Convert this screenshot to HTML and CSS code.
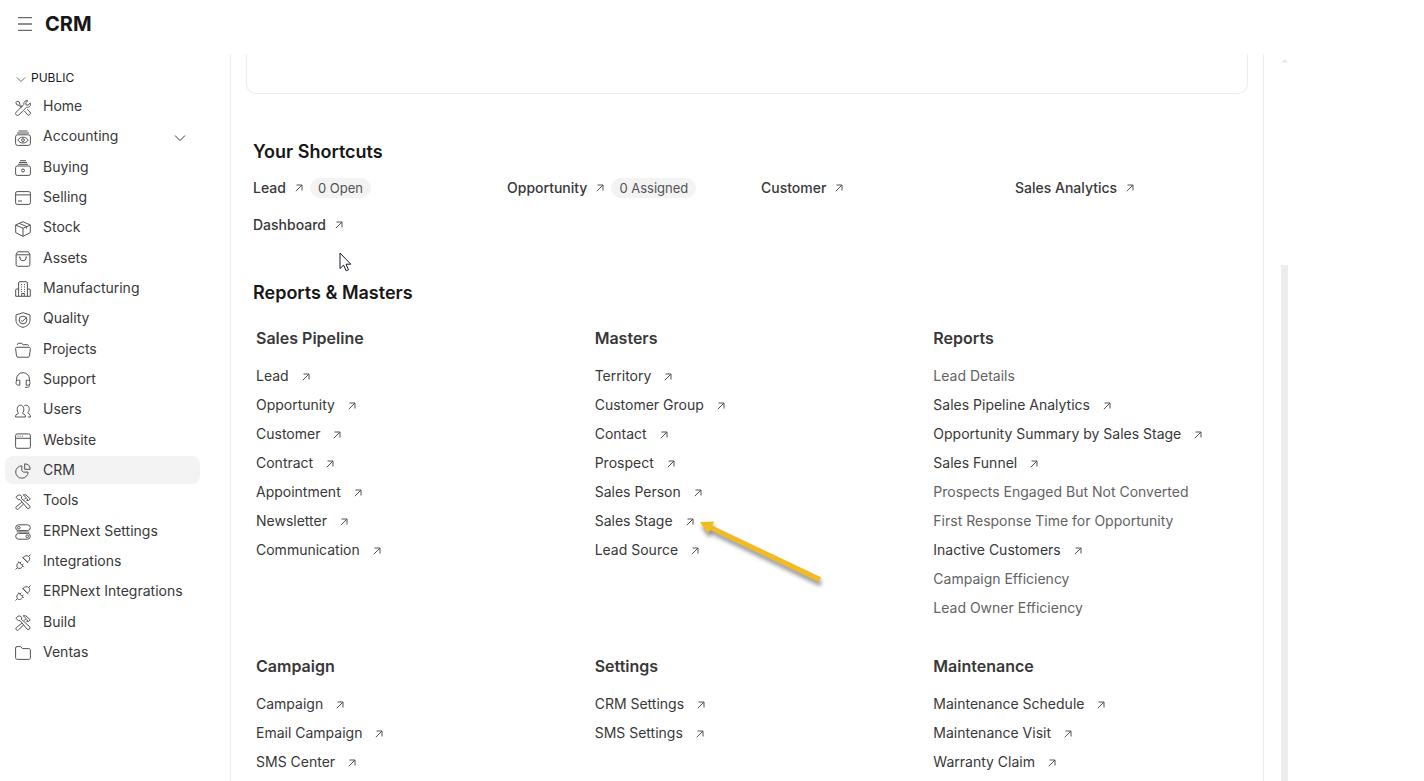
FILE: index.html
```
<!DOCTYPE html>
<html lang="en">
<head>
<meta charset="utf-8">
<meta name="viewport" content="width=device-width, initial-scale=1">
<title>CRM</title>
<link rel="stylesheet" href="styles.css">
</head>
<body>
<svg class="sprite" aria-hidden="true">
  <symbol id="i-out" viewBox="0 0 8 8"><path d="M1.5 1h5.5v5.5M7 1 .8 7.2"/></symbol>
  <symbol id="i-down" viewBox="0 0 12 8"><path d="M1 1.5 6 6.5 11 1.5"/></symbol>
  <symbol id="i-home" viewBox="0 0 16 16"><path d="M2 1.2 4.4 2l.5 2.3L7.4 7M2 1.2.9 2.5l.8 2.2 2.3.6 2.6 2.5M15.2 3.1 13 5.2l-1.9-.4-.4-1.9L12.9.8c-2.2-.7-4.6.9-4.1 3.7L1.2 12.2a1.9 1.9 0 0 0 2.7 2.7l7.6-7.6c2.8.6 4.6-1.9 3.7-4.2zM9.5 11l2.8 3.5a1.8 1.8 0 0 0 2.6-2.6L12 9.3"/></symbol>
  <symbol id="i-accounting" viewBox="0 0 16 16"><path d="M3.500 1h9M2 3h12"/><rect x=".6" y="4.800" width="14.800" height="10.600" rx="2"/><path d="M2.800 10.100c1.300-2 3-2.900 5.200-2.900s3.900.9 5.200 2.900C11.900 12.100 10.200 13 8 13s-3.900-.9-5.200-2.900z"/><circle cx="8" cy="10.100" r="1.400"/></symbol>
  <symbol id="i-buying" viewBox="0 0 16 16"><path d="M5 .7h6M4 2.500h8M3 4.300h10"/><rect x=".6" y="6" width="14.800" height="9.400" rx="1.600"/><circle cx="8" cy="10.500" r="1.500"/></symbol>
  <symbol id="i-selling" viewBox="0 0 16 16"><rect x=".6" y="1.600" width="14.800" height="12.800" rx="1.600"/><path d="M.6 4.900h14.800M3 11h4"/></symbol>
  <symbol id="i-stock" viewBox="0 0 16 16"><path d="M8 .7 15.300 4v7.600L8 15.400.7 11.600V4zM.7 4 8 7.300 15.300 4M8 7.300v8M4.300 2.400l7.300 3.200v1.900"/></symbol>
  <symbol id="i-assets" viewBox="0 0 16 16"><path d="M2.700.8h10.600l1.600 2.500v10.300a1.700 1.700 0 0 1-1.700 1.700H2.800a1.700 1.700 0 0 1-1.700-1.700V3.300zM1.100 3.800h13.800M4.800 6v.6a3.200 3.200 0 0 0 6.400 0V6M4.100 6h1.400M10.500 6h1.400"/></symbol>
  <symbol id="i-manufacturing" viewBox="0 0 16 16"><path d="M3.600 15.300V2a1.300 1.300 0 0 1 1.300-1.300h6.200A1.300 1.300 0 0 1 12.400 2v13.300M3.600 8H1.700a1 1 0 0 0-1 1v6.300h14.600V9a1 1 0 0 0-1-1h-1.900M6.700 15v-2.500h2.600V15"/><path d="M6 3.600h1M9 3.600h1M6 6h1M9 6h1M6 8.400h1M9 8.400h1M6 10.600h1M9 10.600h1"/></symbol>
  <symbol id="i-quality" viewBox="0 0 16 16"><path d="M8 .7 15 2.900v5.300c0 3.800-3.200 6.300-7 7.200-3.800-.9-7-3.400-7-7.200V2.900z"/><circle cx="8" cy="8" r="3.900"/><path d="M5.800 8.200 7.300 9.500 11.500 5.500"/></symbol>
  <symbol id="i-projects" viewBox="0 0 16 16"><path d="M2.500 3V2.300c0-.6.400-1 1-1h3.200l1.500 1.400h4.300c.6 0 1 .4 1 1v.4M1.700 5.300h12.600c.7 0 1.200.5 1.100 1.200l-.9 7.400c-.1.700-.7 1.300-1.500 1.300H3c-.8 0-1.400-.6-1.500-1.300L.6 6.500c-.1-.7.4-1.200 1.100-1.200z"/></symbol>
  <symbol id="i-support" viewBox="0 0 16 16"><path d="M1.500 9V7.200a6.500 6.500 0 0 1 13 0V9M14.500 12v1.500c0 1-.8 1.800-1.800 1.800H10"/><path d="M4.800 8.200v5H3.300C1.800 13.200 1 12 1 10.700s.8-2.500 2.300-2.500zM11.200 8.200v5h1.500c1.500 0 2.300-1.200 2.300-2.500s-.8-2.500-2.300-2.500z"/></symbol>
  <symbol id="i-users" viewBox="0 0 16 16"><path d="M.6 14v-1.200c0-1.700 3-1.700 3-2.800C2.300 9 2 7.300 2.300 5.500 2.500 3.500 3.700 2.200 5.500 2.200s3 1.300 3.200 3.300C9 7.300 8.700 9 7.400 10c0 1.100 3 1.100 3 2.800V14zM9.300 2.700c2.700-1.300 4.700.2 4.900 2.700.1 1.900-.3 3.200-1.400 4.200 0 1.100 2.600 1.500 2.600 3.200V14h-2.600"/></symbol>
  <symbol id="i-website" viewBox="0 0 16 16"><rect x=".6" y=".9" width="14.800" height="14.400" rx="1.600"/><path d="M.6 5.300h14.800M2.500 3.200h1M4.700 3.200h1M6.900 3.200h1"/></symbol>
  <symbol id="i-crm" viewBox="0 0 16 16"><path d="M6.800 2.800a6.200 6.200 0 1 0 6.300 6.300H8.300L6.800 7.600z"/><path d="M9.700.8v5.500h5.500C15.200 3 13 .8 9.700.8z"/></symbol>
  <symbol id="i-tools" viewBox="0 0 16 16"><path d="M3.200 1 1 3.200l2.300 2.500L5 5.500 12 14a1.700 1.700 0 0 0 2.600-2.300L6.300 4.200l.5-1.700L5.300 1zM8.200.8 12.500 5l-.4 1.500M8.200.8h2.600l4.500 4-1.800 1.800-2-.2M10.700 4 9 5.700M6.800 8.200l-5.500 4.500a1.500 1.500 0 0 0 2.200 2.100L8.600 10"/></symbol>
  <symbol id="i-settings" viewBox="0 0 16 16"><rect x=".7" y=".8" width="14.600" height="5.800" rx="2.900"/><rect x=".7" y="9.400" width="14.600" height="5.800" rx="2.900"/><circle cx="3.800" cy="3.700" r="1.300"/><circle cx="12.200" cy="12.300" r="1.300"/><path d="M2.500 6.600C1.500 7.500 2.200 8 3.500 8h9c1.300 0 2 .5 1 1.400"/></symbol>
  <symbol id="i-integrations" viewBox="0 0 16 16"><path d="M15.600.6 13.800 2.300M8 3.700c1.500-2 4-2.700 5.700-1.200s1 4-1.200 5.700zM7.300 3.200l5.800 5.700M.5 15.500l1.800-1.700M3.300 7.500 8.600 12.800M4 8.200c-2.200 1.600-2.900 3.900-1.500 5.500 1.500 1.500 4 .8 5.400-1.500M4.900 9.100 6.300 7.700M7 11.200l1.500-1.400"/></symbol>
  <symbol id="i-folder" viewBox="0 0 16 16"><path d="M.6 3c0-.8.600-1.400 1.400-1.400h3.700l1.800 2h6.300c.9 0 1.600.7 1.600 1.600v7.600c0 .9-.7 1.600-1.600 1.600H2.200c-.9 0-1.600-.7-1.600-1.600z"/></symbol>
</svg>

<header class="topbar">
  <button class="menu-button" type="button" aria-label="Toggle sidebar"><svg class="menu-icon" viewBox="0 0 14 14"><path d="M0 .7h14M0 7h14M0 13.300h14"/></svg></button>
  <h1 class="page-title">CRM</h1>
</header>

<div class="layout">
  <nav class="sidebar" aria-label="Workspaces">
    <button class="section-toggle" type="button"><svg class="toggle-icon"><use href="#i-down"/></svg>PUBLIC</button>
    <ul class="nav-list">
      <li><a class="nav-item" href="#"><svg class="icon"><use href="#i-home"/></svg>Home</a></li>
      <li><a class="nav-item" href="#"><svg class="icon"><use href="#i-accounting"/></svg>Accounting<svg class="expand-icon"><use href="#i-down"/></svg></a></li>
      <li><a class="nav-item" href="#"><svg class="icon"><use href="#i-buying"/></svg>Buying</a></li>
      <li><a class="nav-item" href="#"><svg class="icon"><use href="#i-selling"/></svg>Selling</a></li>
      <li><a class="nav-item" href="#"><svg class="icon"><use href="#i-stock"/></svg>Stock</a></li>
      <li><a class="nav-item" href="#"><svg class="icon"><use href="#i-assets"/></svg>Assets</a></li>
      <li><a class="nav-item" href="#"><svg class="icon"><use href="#i-manufacturing"/></svg>Manufacturing</a></li>
      <li><a class="nav-item" href="#"><svg class="icon"><use href="#i-quality"/></svg>Quality</a></li>
      <li><a class="nav-item" href="#"><svg class="icon"><use href="#i-projects"/></svg>Projects</a></li>
      <li><a class="nav-item" href="#"><svg class="icon"><use href="#i-support"/></svg>Support</a></li>
      <li><a class="nav-item" href="#"><svg class="icon"><use href="#i-users"/></svg>Users</a></li>
      <li><a class="nav-item" href="#"><svg class="icon"><use href="#i-website"/></svg>Website</a></li>
      <li><a class="nav-item active" href="#" aria-current="page"><svg class="icon"><use href="#i-crm"/></svg>CRM</a></li>
      <li><a class="nav-item" href="#"><svg class="icon"><use href="#i-tools"/></svg>Tools</a></li>
      <li><a class="nav-item" href="#"><svg class="icon"><use href="#i-settings"/></svg>ERPNext Settings</a></li>
      <li><a class="nav-item" href="#"><svg class="icon"><use href="#i-integrations"/></svg>Integrations</a></li>
      <li><a class="nav-item" href="#"><svg class="icon"><use href="#i-integrations"/></svg>ERPNext Integrations</a></li>
      <li><a class="nav-item" href="#"><svg class="icon"><use href="#i-tools"/></svg>Build</a></li>
      <li><a class="nav-item" href="#"><svg class="icon"><use href="#i-folder"/></svg>Ventas</a></li>
    </ul>
  </nav>

  <main class="content">
    <div class="chart-card"></div>

    <section class="block">
      <h2 class="block-title">Your Shortcuts</h2>
      <div class="shortcuts">
        <div class="shortcut"><a class="link" href="#">Lead<svg class="out"><use href="#i-out"/></svg></a><span class="badge">0 Open</span></div>
        <div class="shortcut"><a class="link" href="#">Opportunity<svg class="out"><use href="#i-out"/></svg></a><span class="badge">0 Assigned</span></div>
        <div class="shortcut"><a class="link" href="#">Customer<svg class="out"><use href="#i-out"/></svg></a></div>
        <div class="shortcut"><a class="link" href="#">Sales Analytics<svg class="out"><use href="#i-out"/></svg></a></div>
        <div class="shortcut"><a class="link" href="#">Dashboard<svg class="out"><use href="#i-out"/></svg></a></div>
      </div>
    </section>

    <section class="block">
      <h2 class="block-title">Reports &amp; Masters</h2>
      <div class="groups">
        <section class="group">
          <h3 class="group-title">Sales Pipeline</h3>
          <a class="link" href="#">Lead<svg class="out"><use href="#i-out"/></svg></a>
          <a class="link" href="#">Opportunity<svg class="out"><use href="#i-out"/></svg></a>
          <a class="link" href="#">Customer<svg class="out"><use href="#i-out"/></svg></a>
          <a class="link" href="#">Contract<svg class="out"><use href="#i-out"/></svg></a>
          <a class="link" href="#">Appointment<svg class="out"><use href="#i-out"/></svg></a>
          <a class="link" href="#">Newsletter<svg class="out"><use href="#i-out"/></svg></a>
          <a class="link" href="#">Communication<svg class="out"><use href="#i-out"/></svg></a>
        </section>
        <section class="group">
          <h3 class="group-title">Masters</h3>
          <a class="link" href="#">Territory<svg class="out"><use href="#i-out"/></svg></a>
          <a class="link" href="#">Customer Group<svg class="out"><use href="#i-out"/></svg></a>
          <a class="link" href="#">Contact<svg class="out"><use href="#i-out"/></svg></a>
          <a class="link" href="#">Prospect<svg class="out"><use href="#i-out"/></svg></a>
          <a class="link" href="#">Sales Person<svg class="out"><use href="#i-out"/></svg></a>
          <a class="link" href="#">Sales Stage<svg class="out"><use href="#i-out"/></svg></a>
          <a class="link" href="#">Lead Source<svg class="out"><use href="#i-out"/></svg></a>
        </section>
        <section class="group">
          <h3 class="group-title">Reports</h3>
          <a class="link muted" href="#">Lead Details</a>
          <a class="link" href="#">Sales Pipeline Analytics<svg class="out"><use href="#i-out"/></svg></a>
          <a class="link" href="#">Opportunity Summary by Sales Stage<svg class="out"><use href="#i-out"/></svg></a>
          <a class="link" href="#">Sales Funnel<svg class="out"><use href="#i-out"/></svg></a>
          <a class="link muted" href="#">Prospects Engaged But Not Converted</a>
          <a class="link muted" href="#">First Response Time for Opportunity</a>
          <a class="link" href="#">Inactive Customers<svg class="out"><use href="#i-out"/></svg></a>
          <a class="link muted" href="#">Campaign Efficiency</a>
          <a class="link muted" href="#">Lead Owner Efficiency</a>
        </section>
        <section class="group">
          <h3 class="group-title">Campaign</h3>
          <a class="link" href="#">Campaign<svg class="out"><use href="#i-out"/></svg></a>
          <a class="link" href="#">Email Campaign<svg class="out"><use href="#i-out"/></svg></a>
          <a class="link" href="#">SMS Center<svg class="out"><use href="#i-out"/></svg></a>
        </section>
        <section class="group">
          <h3 class="group-title">Settings</h3>
          <a class="link" href="#">CRM Settings<svg class="out"><use href="#i-out"/></svg></a>
          <a class="link" href="#">SMS Settings<svg class="out"><use href="#i-out"/></svg></a>
        </section>
        <section class="group">
          <h3 class="group-title">Maintenance</h3>
          <a class="link" href="#">Maintenance Schedule<svg class="out"><use href="#i-out"/></svg></a>
          <a class="link" href="#">Maintenance Visit<svg class="out"><use href="#i-out"/></svg></a>
          <a class="link" href="#">Warranty Claim<svg class="out"><use href="#i-out"/></svg></a>
        </section>
      </div>
    </section>
  </main>

  <div class="scroll-track" aria-hidden="true">
    <svg class="scroll-up" viewBox="0 0 7 4"><path d="M.5 3.500 3.500.5 6.500 3.500z"/></svg>
    <div class="scroll-thumb"></div>
  </div>
</div>

<svg class="pointer" viewBox="0 0 14 20" aria-hidden="true"><path d="M1 1v15.500l3.600-3.400 2.500 5.700 2.400-1-2.500-5.600h4.800z"/></svg>
<svg class="annotation" viewBox="0 0 130 75" aria-hidden="true"><path d="M3 6 17 5.500 15.500 9.700 124 61.300 122 66 13.500 14 11 17.500z"/></svg>
</body>
</html>
```
FILE: styles.css
```
* {
  box-sizing: border-box;
}

body {
  margin: 0;
  height: 100vh;
  display: flex;
  flex-direction: column;
  overflow: hidden;
  position: relative;
  background: #fff;
  color: #383838;
  font-family: Inter, "Liberation Sans", sans-serif;
  font-size: 14px;
  line-height: 20px;
}

h1, h2, h3, ul {
  margin: 0;
  padding: 0;
}

ul {
  list-style: none;
}

a {
  color: inherit;
  text-decoration: none;
}

button {
  padding: 0;
  border: 0;
  background: none;
  font: inherit;
  cursor: pointer;
}

svg {
  flex: none;
  fill: none;
  stroke: currentColor;
}

.sprite {
  position: absolute;
  width: 0;
  height: 0;
}

.topbar {
  display: flex;
  align-items: center;
  gap: 13px;
  flex: none;
  height: 54px;
  padding: 0 18px 6px;
}

.menu-button {
  display: flex;
  color: #6b6b6b;
}

.menu-icon {
  width: 14px;
  height: 14px;
  stroke-width: 1.3;
}

.page-title {
  color: #171717;
  font-size: 20px;
  font-weight: 700;
  line-height: 28px;
}

.layout {
  display: flex;
  flex: 1;
  min-height: 0;
  padding-right: 136px;
}

.sidebar {
  flex: none;
  width: 230px;
  padding: 14px 30px 0 5px;
}

.section-toggle {
  display: flex;
  align-items: center;
  gap: 5px;
  margin-left: 11px;
  color: #171717;
  font-size: 12px;
}

.toggle-icon {
  width: 10px;
  height: 7px;
  margin-top: 2px;
  color: #525252;
}

.nav-list {
  display: flex;
  flex-direction: column;
  justify-content: space-between;
  min-height: 574px;
  margin-top: 4px;
}

.nav-item {
  display: flex;
  align-items: center;
  gap: 12px;
  height: 28px;
  padding: 0 14px 0 10px;
  border-radius: 8px;
}

.active {
  background: #f3f3f3;
}

.icon {
  width: 16px;
  height: 16px;
  margin-top: 3px;
  color: #525252;
}

.expand-icon {
  width: 12px;
  height: 8px;
  margin: 4px 0 0 auto;
}

.content {
  flex: 1;
  min-width: 0;
  padding: 0 15px;
  overflow: hidden;
  border: solid #ededed;
  border-width: 0 1px;
}

.chart-card {
  height: 40px;
  border: 1px solid #ededed;
  border-top: 0;
  border-radius: 0 0 10px 10px;
}

.block {
  margin-top: 46px;
  padding-left: 7px;
}

.block-title {
  color: #171717;
  font-size: 18px;
  font-weight: 600;
  line-height: 24px;
}

.shortcuts {
  display: grid;
  grid-template-columns: repeat(4, 1fr);
  gap: 17px 21px;
  margin-top: 14px;
}

.shortcut {
  display: flex;
  align-items: center;
  gap: 7px;
  font-weight: 500;
}

.shortcut .link {
  gap: 9px;
}

.badge {
  padding: 0 8px;
  border-radius: 10px;
  background: #f3f3f3;
  color: #525252;
  font-size: 13px;
  font-weight: 400;
}

.groups {
  display: grid;
  grid-template-columns: repeat(3, 1fr);
  gap: 32px 24px;
  margin-top: 21px;
  padding-left: 3px;
}

.group {
  display: flex;
  flex-direction: column;
  align-items: flex-start;
}

.group-title {
  margin-bottom: 11px;
  font-size: 16px;
  font-weight: 600;
  line-height: 24px;
}

.link {
  display: flex;
  align-items: center;
  gap: 13px;
  white-space: nowrap;
}

.group .link {
  line-height: 29px;
}

.muted {
  color: #636363;
}

.out {
  width: 8px;
  height: 8px;
  color: #525252;
}

.group .out {
  margin-top: 3px;
}

.scroll-track {
  display: flex;
  flex-direction: column;
  flex: none;
  width: 7px;
  margin-left: 17px;
}

.scroll-up {
  width: 7px;
  height: 4px;
  margin-top: 5px;
  fill: #e2e2e2;
  stroke: none;
}

.scroll-thumb {
  height: 71%;
  margin-top: auto;
  background: #ededed;
}

.pointer {
  position: absolute;
  top: 252px;
  left: 339px;
  width: 14px;
  height: 20px;
  fill: #fff;
  stroke: #171723;
}

.annotation {
  position: absolute;
  top: 516px;
  left: 697px;
  width: 130px;
  height: 75px;
  fill: #f2bb22;
  stroke: none;
  filter: drop-shadow(1px 4px 2px #00000070);
}
```
